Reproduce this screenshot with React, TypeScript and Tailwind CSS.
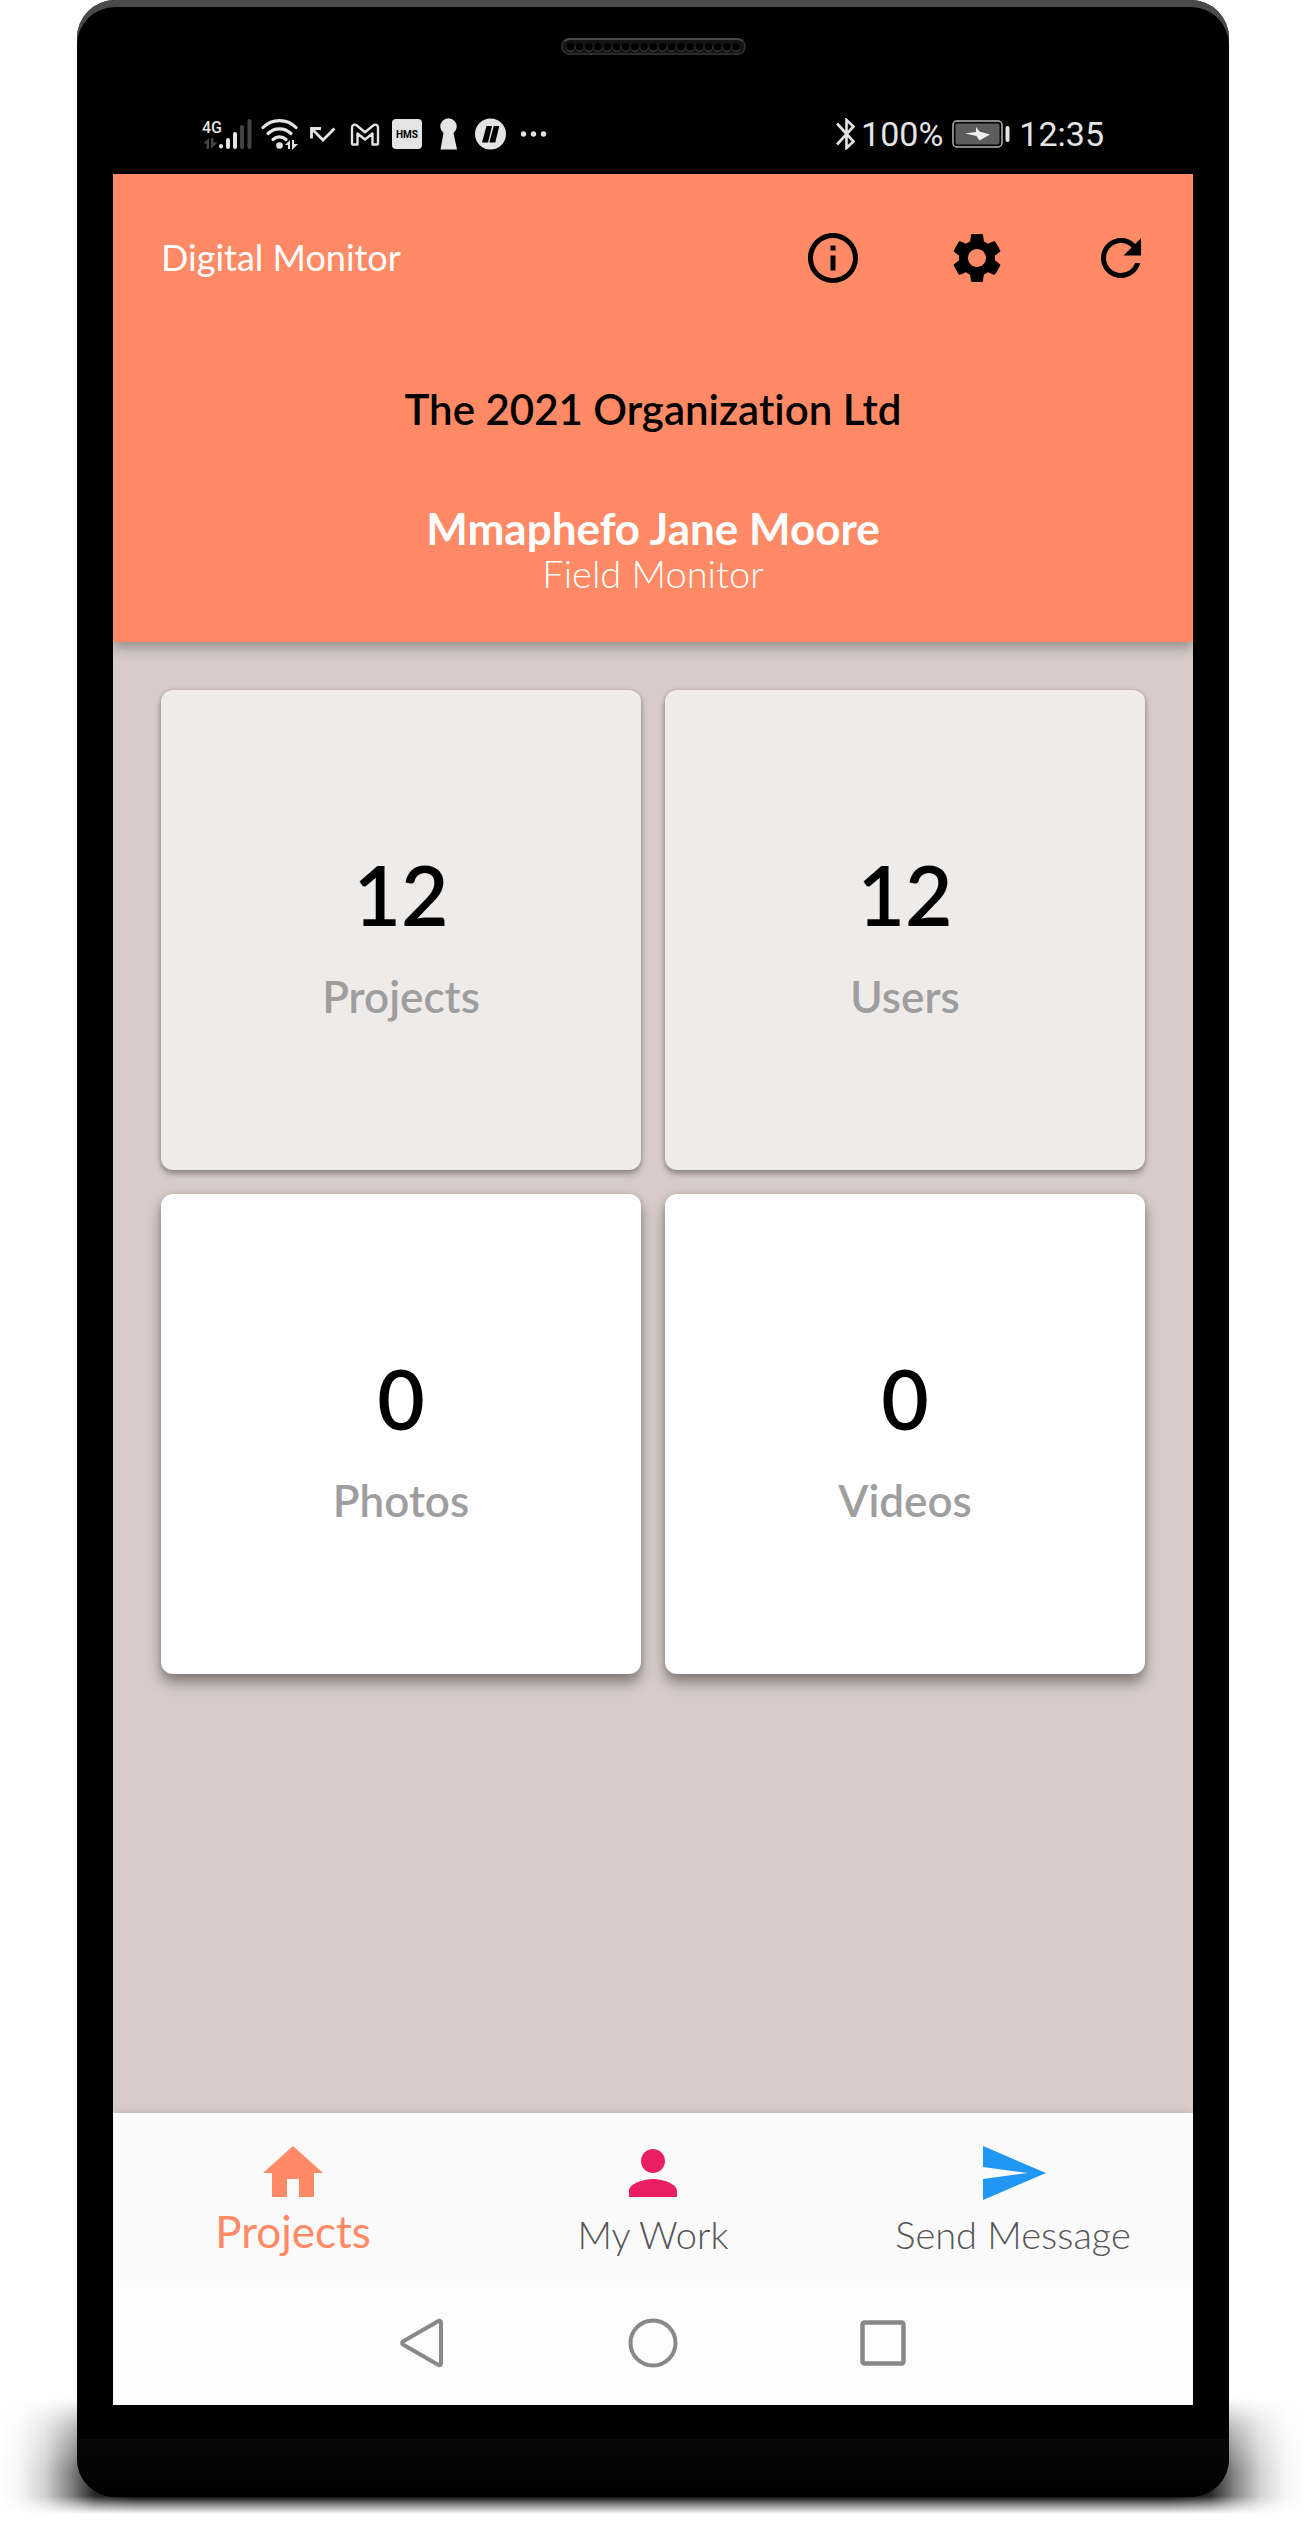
import React from "react";
import {
  MdHome,
  MdInfoOutline,
  MdPerson,
  MdRefresh,
  MdSend,
  MdSettings,
} from "react-icons/md";

const ICON_GREY = "#e4e4e4";

function SignalIcon() {
  return (
    <svg width="50" height="32" viewBox="0 0 50 32" aria-label="4G signal">
      <text x="0" y="15" fontFamily="Roboto, sans-serif" fontSize="16" fontWeight="500" fill={ICON_GREY}>
        4G
      </text>
      <path d="M1 25.5L7 20V31H4.500V25.500ZM9 20H11.500V24.500H15.500L9 31Z" fill="#444444" />
      <g strokeWidth="4" strokeLinecap="round">
        <path d="M19 28v.5M26 22v7M33 16v13" stroke={ICON_GREY} />
        <path d="M40 9v20M47.500 3v26" stroke="#444444" />
      </g>
    </svg>
  );
}

function WifiIcon() {
  return (
    <svg width="38" height="32" viewBox="0 0 38 32" aria-label="Wi-Fi">
      <g fill="none" stroke={ICON_GREY} strokeWidth="3.200" strokeLinecap="round">
        <path d="M3 9.500C12 .2 27 .2 36 9.500" />
        <path d="M8 15.500c6.500-6.300 16.500-6.300 23 0" />
        <path d="M13 21.500c3.800-3.600 9.200-3.600 13 0" />
      </g>
      <circle cx="19.500" cy="27.500" r="3.300" fill={ICON_GREY} />
      <path d="M25 27l5-5v9h-2v-4zM32 22h2v4h4l-6 6z" fill={ICON_GREY} />
    </svg>
  );
}

function MissedCallIcon() {
  return (
    <svg width="32" height="32" viewBox="0 0 32 32" aria-label="Missed call">
      <path d="M5.500 20.500V10.500H15M6 11l11 11L28.500 10.500" fill="none" stroke={ICON_GREY} strokeWidth="2.800" />
    </svg>
  );
}

function MailIcon() {
  return (
    <svg width="38" height="32" viewBox="0 0 38 32" aria-label="Mail">
      <path
        d="M6 9.500C6 6.600 8.800 6 10.500 7.300L19 14.200l8.500-6.900C29.200 6 32 6.600 32 9.500V25.500a1 1 0 0 1-1 1h-4.500V15.500L19 21.500l-7.500-6V26.500H7a1 1 0 0 1-1-1z"
        fill="none"
        stroke={ICON_GREY}
        strokeWidth="2.400"
        strokeLinejoin="round"
      />
    </svg>
  );
}

function HmsIcon() {
  return (
    <svg width="30" height="32" viewBox="0 0 30 32" aria-label="HMS">
      <rect y="1" width="30" height="30" rx="4" fill={ICON_GREY} />
      <text x="15" y="20" textAnchor="middle" fontFamily="Roboto, sans-serif" fontSize="10" fontWeight="700" fill="#000000">
        HMS
      </text>
    </svg>
  );
}

function KeyholeIcon() {
  return (
    <svg width="36" height="32" viewBox="0 0 36 32" aria-label="Private">
      <path d="M13.500 15A8.200 8.200 0 1 1 23.500 15L27 31.500H10.500z" fill={ICON_GREY} />
    </svg>
  );
}

function SlashIcon() {
  return (
    <svg width="32" height="32" viewBox="0 0 32 32" aria-label="App notification">
      <circle cx="16.500" cy="16" r="15.500" fill={ICON_GREY} />
      <path d="M12.500 8h5.500l-4 16.500h-6zM19.800 8h5.500l-4 16.500h-6z" fill="#000000" />
    </svg>
  );
}

function MoreIcon() {
  return (
    <svg width="36" height="32" viewBox="0 0 36 32" aria-label="More">
      <g fill={ICON_GREY}>
        <circle cx="9.500" cy="16" r="2.700" />
        <circle cx="19.500" cy="16" r="2.700" />
        <circle cx="29.500" cy="16" r="2.700" />
      </g>
    </svg>
  );
}

function BluetoothIcon() {
  return (
    <svg width="20" height="32" viewBox="0 0 20 32" aria-label="Bluetooth">
      <path d="M1 5.500L17.500 23.500L10.500 30V2L17.500 8.500L1 26.500" fill="none" stroke={ICON_GREY} strokeWidth="2.600" />
    </svg>
  );
}

function BatteryIcon() {
  return (
    <svg width="58" height="28" viewBox="0 0 58 28" aria-label="Charging">
      <rect x="1" y="1" width="49" height="26" rx="4" fill="none" stroke="#b5b5b5" strokeWidth="1.500" />
      <rect x="3.500" y="3.500" width="44" height="21" rx="2" fill="#5c5c5c" />
      <path d="M24 7l3.500 4.500 10.500 3-10.500 6-3-4.500L13 13.500l11-1.500z" fill="#f0f0f0" />
      <rect x="53.500" y="6" width="4" height="16" rx="2" fill={ICON_GREY} />
    </svg>
  );
}

function Speaker() {
  return (
    <div className="flex h-[17px] w-[185px] items-center justify-center rounded-full border-2 border-[#2b2b2b] border-t-[#484848] bg-[#141414]">
      <svg width="177" height="10" viewBox="0 0 177 10" aria-hidden="true">
        {Array.from({ length: 19 }, (_, i) => (
          <g key={i}>
            <circle cx={5.500 + i * 9.200} cy="5.500" r="4.200" fill="#4a4a4a" />
            <circle cx={5.500 + i * 9.200} cy="4.800" r="3.900" fill="#000000" />
          </g>
        ))}
      </svg>
    </div>
  );
}

function StatusBar() {
  return (
    <div className="flex h-[82px] items-center justify-between px-[89px] pt-0.5 font-[Roboto,sans-serif] text-[34px] leading-none text-[#e4e4e4]">
      <div className="flex items-center gap-2">
        <SignalIcon />
        <WifiIcon />
        <MissedCallIcon />
        <MailIcon />
        <HmsIcon />
        <KeyholeIcon />
        <SlashIcon />
        <MoreIcon />
      </div>
      <div className="flex items-center gap-[9px]">
        <div className="flex items-center gap-[5px]">
          <BluetoothIcon />
          <span>100%</span>
        </div>
        <BatteryIcon />
        <span>12:35</span>
      </div>
    </div>
  );
}

function ActionButton({ label, children }: { label: string; children: React.ReactNode }) {
  return (
    <button type="button" aria-label={label} className="flex h-36 w-36 items-center justify-center text-black">
      {children}
    </button>
  );
}

function Header() {
  return (
    <header className="relative bg-[#ff8a65] pb-12 shadow-[0_6px_12px_rgba(0,0,0,0.3)]">
      <div className="flex h-[168px] items-center justify-between pl-12">
        <span className="pb-0.5 text-[36px] leading-[44px] text-white">Digital Monitor</span>
        <div className="flex">
          <ActionButton label="Info">
            <MdInfoOutline size={60} />
          </ActionButton>
          <ActionButton label="Settings">
            <MdSettings size={60} />
          </ActionButton>
          <ActionButton label="Refresh">
            <MdRefresh size={60} />
          </ActionButton>
        </div>
      </div>
      <div className="flex flex-col items-center pt-[42px] text-center">
        <h1 className="text-[42px] leading-[50px] font-semibold text-black">The 2021 Organization Ltd</h1>
        <h2 className="mt-[70px] text-[44px] leading-[48px] font-bold text-white">Mmaphefo Jane Moore</h2>
        <p className="text-[38px] leading-[42px] font-light text-white">Field Monitor</p>
      </div>
    </header>
  );
}

const stats = [
  { label: "Projects", value: 12, raised: false },
  { label: "Users", value: 12, raised: false },
  { label: "Photos", value: 0, raised: true },
  { label: "Videos", value: 0, raised: true },
];

function StatCard({ label, value, raised }: { label: string; value: number; raised: boolean }) {
  const look = raised
    ? "bg-white shadow-[0_9px_14px_rgba(0,0,0,0.38),0_0_6px_rgba(0,0,0,0.12)]"
    : "bg-[#efebe9] shadow-[0_4px_6px_rgba(0,0,0,0.32),0_0_4px_rgba(0,0,0,0.15)]";
  return (
    <button
      type="button"
      className={`flex aspect-square flex-col items-center justify-center gap-[30px] rounded-xl pt-1.5 ${look}`}
    >
      <span className="text-[82px] leading-[96px] font-semibold text-black">{value}</span>
      <span className="text-[44px] leading-[48px] font-semibold text-[#9e9e9e]">{label}</span>
    </button>
  );
}

function BottomNav() {
  const item = "flex flex-1 flex-col items-center pt-6";
  return (
    <nav className="flex h-[168px] bg-[#fafafa] shadow-[0_-1px_8px_rgba(0,0,0,0.12)]">
      <button type="button" aria-current="page" className={item}>
        <MdHome size={72} className="text-[#ff8a65]" />
        <span className="text-[44px] leading-[44px] text-[#ff8a65]">Projects</span>
      </button>
      <button type="button" className={item}>
        <MdPerson size={72} className="text-[#e91e63]" />
        <span className="text-[38px] leading-[50px] font-light text-[#555555]">My Work</span>
      </button>
      <button type="button" className={item}>
        <MdSend size={72} className="text-[#2196f3]" />
        <span className="text-[38px] leading-[50px] font-light text-[#555555]">Send Message</span>
      </button>
    </nav>
  );
}

function SystemNav() {
  const key = "flex w-[230px] items-center justify-center";
  return (
    <div className="flex h-[124px] justify-center bg-[#fcfcfc]">
      <button type="button" aria-label="Back" className={key}>
        <svg width="50" height="52" viewBox="0 0 50 52" fill="none" stroke="#888888" strokeWidth="4" strokeLinejoin="round">
          <path d="M43 5.500V46.500a1.800 1.800 0 0 1-3 1.300L5 27.500a1.800 1.800 0 0 1 0-3L40 4.200a1.800 1.800 0 0 1 3 1.300z" />
        </svg>
      </button>
      <button type="button" aria-label="Home" className={key}>
        <svg width="50" height="50" viewBox="0 0 50 50" fill="none" stroke="#888888" strokeWidth="4">
          <circle cx="25" cy="25" r="22.500" />
        </svg>
      </button>
      <button type="button" aria-label="Recent apps" className={key}>
        <svg width="46" height="46" viewBox="0 0 46 46" fill="none" stroke="#888888" strokeWidth="4.500">
          <rect x="2.500" y="2.500" width="41" height="41" rx="2" />
        </svg>
      </button>
    </div>
  );
}

export default function App() {
  return (
    <div className="relative flex min-h-screen flex-col bg-white pr-[76px] pb-[25px] pl-[77px] font-[Lato,sans-serif] [font-variant-ligatures:none]">
      {/* Ground shadow under the handset */}
      <div
        aria-hidden="true"
        className="absolute inset-x-0 bottom-2 h-[116px] bg-[linear-gradient(to_right,transparent_0,rgba(0,0,0,0.04)_20px,rgba(0,0,0,0.18)_45px,rgba(0,0,0,0.5)_72px,rgba(0,0,0,0.85)_95px,#000_135px,#000_calc(100%-135px),rgba(0,0,0,0.85)_calc(100%-95px),rgba(0,0,0,0.5)_calc(100%-72px),rgba(0,0,0,0.18)_calc(100%-45px),rgba(0,0,0,0.04)_calc(100%-20px),transparent_100%)] [mask-image:linear-gradient(to_bottom,transparent_0,rgba(0,0,0,0.5)_30px,#000_75px,#000_calc(100%-18px),rgba(0,0,0,0.5)_calc(100%-10px),transparent_100%)]"
      />
      <div className="relative flex flex-1 flex-col overflow-hidden rounded-[38px] bg-black px-9 shadow-[inset_0_7px_0_#4a4a4a]">
        <div className="flex h-[92px] justify-center pt-[38px]">
          <Speaker />
        </div>
        <StatusBar />
        <div className="flex flex-1 flex-col bg-[#d7ccc8]">
          <Header />
          <main className="grid flex-1 grid-cols-2 content-start gap-6 p-12">
            {stats.map((stat) => (
              <StatCard key={stat.label} {...stat} />
            ))}
          </main>
          <BottomNav />
          <SystemNav />
        </div>
        <div className="-mx-9 h-[92px] bg-[linear-gradient(to_bottom,#000_34px,#070707_34px,#050505_65px,#000_90px)]" />
      </div>
    </div>
  );
}
